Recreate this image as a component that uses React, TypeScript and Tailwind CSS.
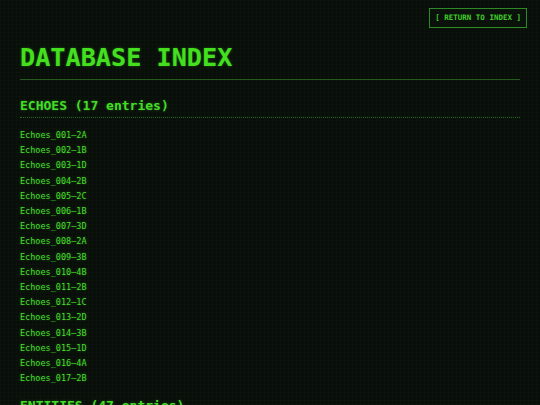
import React from 'react';

const echoes = [
  '001—2A', '002—1B', '003—1D', '004—2B', '005—2C', '006—1B', '007—3D', '008—2A', '009—3B',
  '010—4B', '011—2B', '012—1C', '013—2D', '014—3B', '015—1D', '016—4A', '017—2B',
];

const mono = 'font-["DejaVu_Sans_Mono",monospace]';

export default function App() {
  return (
    <main
      className={`relative h-[405px] w-[540px] overflow-hidden bg-[#0a0e0a] ${mono} text-[#45dc28] [text-shadow:0_0_3px_rgba(60,230,40,0.35)] bg-[linear-gradient(rgba(40,120,40,0.035)_1px,transparent_1px),linear-gradient(90deg,rgba(40,120,40,0.035)_1px,transparent_1px)] bg-[size:4px_4px]`}
    >
      <button className="absolute right-[13px] top-[8px] border border-[#2e8a24] bg-[#0b120b] px-[5px] py-[4px] text-[7.5px] font-bold leading-[10px] text-[#3fcf26]">
        [ RETURN TO INDEX ]
      </button>

      <div className="px-[20px] pt-[43px]">
        <h1 className="border-b border-[#245a1c] pb-[6px] text-[25.2px] font-bold leading-[30px] text-[#44e01e]">
          DATABASE INDEX
        </h1>

        <section className="mt-[18px]">
          <h2 className="border-b border-dotted border-[#2a6a20] pb-[3px] text-[13px] font-bold leading-[16px]">
            ECHOES (17 entries)
          </h2>
          <ul className="mt-[10px] flex flex-col">
            {echoes.map((e) => (
              <li key={e} className="text-[8.5px] leading-[15.2px] text-[#48dc2c]">
                Echoes_{e}
              </li>
            ))}
          </ul>
        </section>

        <section className="mt-[12px]">
          <h2 className="text-[13px] font-bold leading-[16px]">ENTITIES (47 entries)</h2>
        </section>
      </div>
    </main>
  );
}
